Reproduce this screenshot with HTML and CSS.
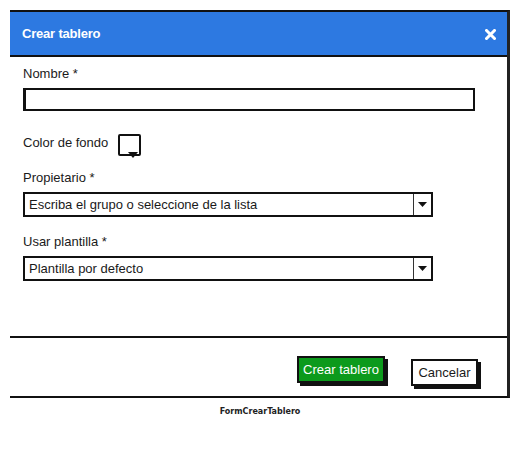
FILE: index.html
```html
<!DOCTYPE html>
<html lang="es">
<head>
<meta charset="utf-8">
<title>FormCrearTablero</title>
<link rel="stylesheet" href="styles.css">
</head>
<body>
<div class="frame">
  <div class="dialog">
    <div class="header">
      <span class="title">Crear tablero</span>
      <svg class="close" width="11" height="11" viewBox="0 0 11 11"><path d="M1.5 1.5 L9.5 9.5 M9.5 1.5 L1.5 9.5" stroke="#fff" stroke-width="3" stroke-linecap="square"/></svg>
    </div>
    <div class="body">
      <div class="label">Nombre *</div>
      <div class="input"></div>
      <div class="color-row">
        <span class="color-label">Color de fondo</span>
        <span class="swatch">
          <svg class="swatch-arrow" width="10" height="7" viewBox="0 0 10 7"><path d="M0 0 H10 L5 6 Z" fill="#111"/></svg>
        </span>
      </div>
      <div class="label gap-prop">Propietario *</div>
      <div class="combo">
        <span class="combo-text">Escriba el grupo o seleccione de la lista</span>
        <span class="combo-btn"><svg width="9" height="6" viewBox="0 0 9 6"><path d="M0 0 H9 L4.5 5 Z" fill="#111"/></svg></span>
      </div>
      <div class="label gap-tpl">Usar plantilla *</div>
      <div class="combo">
        <span class="combo-text">Plantilla por defecto</span>
        <span class="combo-btn"><svg width="9" height="6" viewBox="0 0 9 6"><path d="M0 0 H9 L4.5 5 Z" fill="#111"/></svg></span>
      </div>
    </div>
    <div class="footer">
      <button class="btn btn-primary">Crear tablero</button>
      <button class="btn btn-cancel">Cancelar</button>
    </div>
  </div>
  <div class="caption">FormCrearTablero</div>
</div>
</body>
</html>
```
FILE: styles.css
```css
* { box-sizing: border-box; }
html, body { margin: 0; padding: 0; background: #fff; }
body {
  font-family: "Liberation Sans", Arial, sans-serif;
  font-size: 13px;
  color: #1a1a1a;
}
.frame {
  width: 522px;
  padding: 10px 0 0 10px;
}
.dialog {
  width: 500px;
  border-top: 2px solid #111;
  border-right: 3px solid #222;
  border-bottom: 2px solid #111;
  background: #fff;
}
.header {
  height: 45px;
  background: #2d79e1;
  border-bottom: 2px solid #111;
  display: flex;
  align-items: center;
  justify-content: space-between;
  padding: 0 11px 0 12px;
}
.title {
  color: #fff;
  font-weight: bold;
  font-size: 13px;
  letter-spacing: -0.2px;
}
.close { display: block; margin-top: 1px; }
.body {
  height: 279px;
  padding: 9px 0 0 13px;
}
.label {
  line-height: 16px;
  height: 16px;
}
.input {
  margin-top: 6px;
  width: 452px;
  height: 23px;
  border: 2px solid #111;
  border-left-width: 3px;
  background: #fff;
}
.color-row {
  margin-top: 22px;
  height: 24px;
  display: flex;
  align-items: center;
  gap: 10px;
}
.color-label { line-height: 16px; margin-top: -4px; }
.swatch {
  position: relative;
  width: 23px;
  height: 22px;
  border: 2px solid #111;
  border-radius: 2px;
  margin-left: 0;
}
.swatch-arrow {
  position: absolute;
  right: 1px;
  bottom: -5px;
}
.gap-prop { margin-top: 13px; }
.gap-tpl { margin-top: 17px; }
.combo {
  margin-top: 6px;
  width: 410px;
  height: 25px;
  border: 2px solid #111;
  border-left-width: 2px;
  display: flex;
  align-items: center;
}
.combo-text {
  flex: 1;
  padding-left: 4px;
  line-height: 16px;
}
.combo-btn {
  width: 18px;
  height: 100%;
  border-left: 1.5px solid #333;
  display: flex;
  align-items: center;
  justify-content: center;
}
.footer {
  height: 60px;
  border-top: 2px solid #111;
  display: flex;
  justify-content: flex-end;
  align-items: flex-start;
  gap: 26px;
  padding: 18px 29px 0 0;
}
.btn {
  font-family: "Liberation Sans", Arial, sans-serif;
  font-size: 13px;
  height: 27px;
  padding: 0;
  border: 2px solid #111;
  cursor: pointer;
}
.btn-primary {
  width: 88px;
  background: #0c9a1c;
  color: #fff;
  box-shadow: 3px 3px 0 #111;
}
.btn-cancel {
  width: 67px;
  margin-top: 3px;
  background: #fff;
  color: #1a1a1a;
  box-shadow: 3px 3px 0 #111;
}
.caption {
  width: 500px;
  text-align: center;
  font-family: "DejaVu Sans", Verdana, sans-serif;
  font-weight: bold;
  font-size: 8px;
  margin-top: 9px;
  color: #222;
}
```
